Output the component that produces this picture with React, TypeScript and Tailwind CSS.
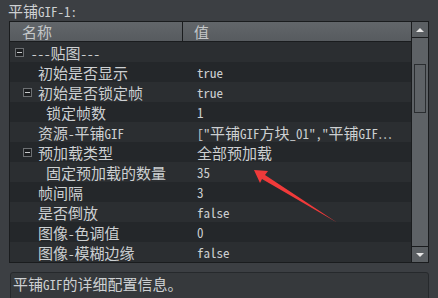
import React from "react";

const CJK_RE = /([\u3000-\u303f\u3400-\u9fff\uff00-\uffef]+)/;

function T({ s }: { s: string }) {
  const parts = s.split(CJK_RE);
  return (
    <>
      {parts.map((p, i) =>
        p ? (
          i % 2 ? (
            <span key={i} className="font-['Noto_Sans_CJK_SC',sans-serif] text-[15px]">
              {p}
            </span>
          ) : (
            <span key={i} className="font-['Noto_Sans_Mono_CJK_SC','DejaVu_Sans_Mono',monospace] text-[13px]">
              {p}
            </span>
          )
        ) : null
      )}
    </>
  );
}

function Box() {
  return (
    <div className="w-[9px] h-[9px] border border-[#6d7073] bg-[#1d1f21] flex items-center justify-center shrink-0">
      <div className="w-[5px] h-[1px] bg-[#c9cbcd]" />
    </div>
  );
}

type Row = { n: string; v: string; lead: string; box: boolean; gap: string };

const rows: Row[] = [
  { n: "---贴图---", v: "", lead: "w-[5px]", box: true, gap: "w-[7px]" },
  { n: "初始是否显示", v: "true", lead: "w-[28px]", box: false, gap: "w-0" },
  { n: "初始是否锁定帧", v: "true", lead: "w-[13px]", box: true, gap: "w-[6px]" },
  { n: "锁定帧数", v: "1", lead: "w-[36px]", box: false, gap: "w-0" },
  { n: "资源-平铺GIF", v: "[\"平铺GIF方块_01\",\"平铺GIF…", lead: "w-[28px]", box: false, gap: "w-0" },
  { n: "预加载类型", v: "全部预加载", lead: "w-[13px]", box: true, gap: "w-[6px]" },
  { n: "固定预加载的数量", v: "35", lead: "w-[36px]", box: false, gap: "w-0" },
  { n: "帧间隔", v: "3", lead: "w-[28px]", box: false, gap: "w-0" },
  { n: "是否倒放", v: "false", lead: "w-[28px]", box: false, gap: "w-0" },
  { n: "图像-色调值", v: "0", lead: "w-[28px]", box: false, gap: "w-0" },
  { n: "图像-模糊边缘", v: "false", lead: "w-[28px]", box: false, gap: "w-0" },
];

export default function App() {
  return (
    <div className="relative w-[438px] h-[298px] overflow-hidden bg-[#3c3f43] text-[#cdd0d2]">
      <div className="h-[21px] pl-[8px] leading-[22px] whitespace-nowrap">
        <T s="平铺GIF-1:" />
      </div>

      <div className="ml-[9px] w-[420px] h-[242px] border border-[#1a1c1e] flex">
        <div className="flex-1 flex flex-col bg-[#2a2d30]">
          <div className="h-[20px] flex border-b border-[#1a1c1e] bg-gradient-to-b from-[#62666a] to-[#575b5f] text-[#c4c7c9] leading-[20px]">
            <div className="w-[173px] border-r border-[#1a1c1e] pl-[12px]">
              <T s="名称" />
            </div>
            <div className="flex-1 pl-[11px]">
              <T s="值" />
            </div>
          </div>
          {rows.map((r, i) => (
            <div
              key={i}
              className={
                "h-[20px] flex items-center whitespace-nowrap leading-[21px] " +
                (i % 2 ? "bg-[#24272a]" : "bg-[#2b2e31]")
              }
            >
              <div className="w-[174px] h-[20px] flex items-center">
                <div className={r.lead + " shrink-0"} />
                {r.box ? <Box /> : null}
                <div className={r.gap + " shrink-0"} />
                <div className="h-[20px]">
                  <T s={r.n} />
                </div>
              </div>
              <div className="flex-1 h-[20px] pl-[13px] overflow-hidden">
                <T s={r.v} />
              </div>
            </div>
          ))}
        </div>
        <div className="w-[17px] flex flex-col border-l border-[#1a1c1e] bg-[#5e6266]">
          <div className="h-[16px] border-b border-[#1a1c1e] bg-[#5b5f63] flex items-center justify-center">
            <div className="w-0 h-0 border-l-[4px] border-r-[4px] border-b-[4px] border-l-transparent border-r-transparent border-b-[#e6e6e6]" />
          </div>
          <div className="flex-1 px-[2px] pt-[26px]">
            <div className="h-[49px] border border-[#2a2d30] bg-[#5e6266]" />
          </div>
          <div className="h-[16px] border-t border-[#1a1c1e] bg-[#5b5f63] flex items-center justify-center">
            <div className="w-0 h-0 border-l-[4px] border-r-[4px] border-t-[4px] border-l-transparent border-r-transparent border-t-[#e6e6e6]" />
          </div>
        </div>
      </div>

      <div className="mt-[9px] ml-[10px] w-[419px] h-[40px] rounded-[3px] border border-[#26292c] bg-[#36393c] pl-[2px] leading-[22px] whitespace-nowrap">
        <T s="平铺GIF的详细配置信息。" />
      </div>

      <svg className="absolute left-0 top-0 pointer-events-none" width="438" height="298" viewBox="0 0 438 298">
        <polygon points="254,170 268,171 265,175 337,222.5 262,179 260,183" fill="#f03a3a" />
      </svg>
    </div>
  );
}
